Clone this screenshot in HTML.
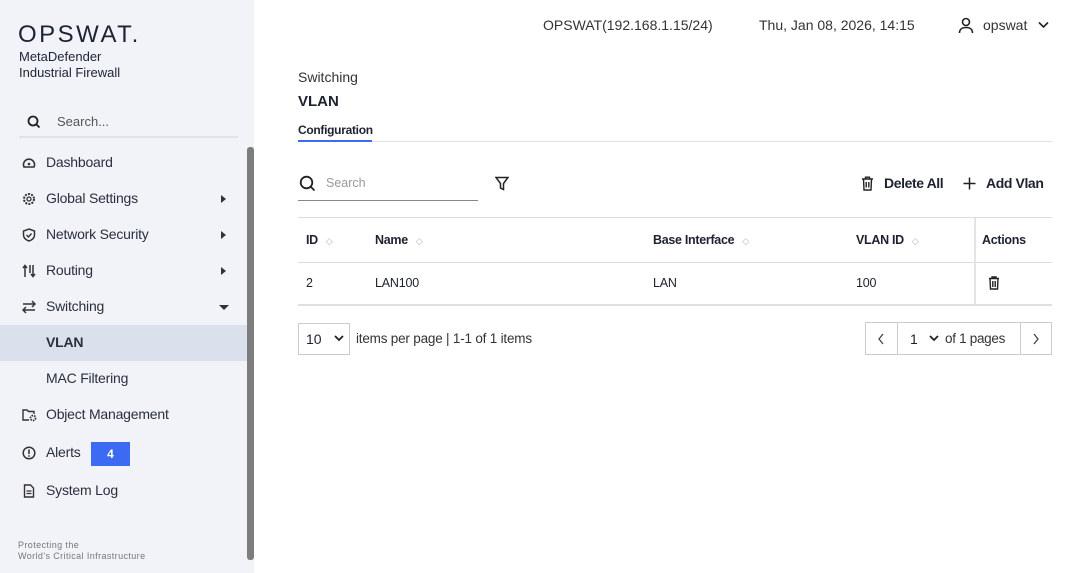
<!DOCTYPE html><html><head><meta charset="utf-8"><style>
*{box-sizing:border-box;margin:0;padding:0}
body{width:1080px;height:573px;overflow:hidden;font-family:"Liberation Sans",sans-serif;background:#fff;position:relative;color:#1e2230}
.sb{position:absolute;left:0;top:0;width:254px;height:573px;background:#f1f3f9}
.scroll{position:absolute;left:247px;top:147px;width:7px;height:413px;background:#7d7d7d;border-radius:3px}
.t{position:absolute;white-space:nowrap}
.nav{position:absolute;left:0;width:247px;height:36px;font-size:14px;color:#2a2f3d;letter-spacing:-0.2px}
.nav span{position:absolute;left:46px;top:9px}
.nav svg{position:absolute;left:22px;top:11px}
.arr{position:absolute;left:221px;top:14px;width:0;height:0;border-top:4px solid transparent;border-bottom:4px solid transparent;border-left:5px solid #333}
.hd{font-size:12.5px;font-weight:bold;letter-spacing:-0.3px}
.cell{font-size:12.5px;letter-spacing:-0.2px}
.sort{display:inline-block;color:#d0d3da;font-size:9px;margin-left:8px}
</style></head><body>
<div class="sb">
<div class="t" style="left:18px;top:21px;font-size:24px;letter-spacing:2.5px;color:#1d2333;font-weight:300">OPSWAT.</div>
<div class="t" style="left:19px;top:49px;font-size:13px;line-height:16px;color:#1d2333">MetaDefender<br>Industrial Firewall</div>
<svg class="t" style="left:27px;top:115px" width="14" height="14" viewBox="0 0 14 14"><circle cx="6" cy="6" r="4.5" fill="none" stroke="#222" stroke-width="1.8"/><path d="M9.5 9.5L12.5 12.5" stroke="#222" stroke-width="1.8"/></svg>
<div class="t" style="left:57px;top:114px;font-size:13px;color:#555">Search...</div>
<div class="t" style="left:19px;top:136px;width:219px;height:2px;background:#e0e2e8"></div>
<div class="nav" style="top:145px"><svg width="14" height="14" viewBox="0 0 14 14"><path d="M2 11A5.5 5.5 0 1 1 12 11Z" fill="none" stroke="#333" stroke-width="1.6"/><circle cx="7" cy="8" r="1.3" fill="#333"/></svg><span>Dashboard</span></div>
<div class="nav" style="top:181px"><svg width="14" height="14" viewBox="0 0 14 14"><circle cx="7" cy="7" r="5" fill="none" stroke="#333" stroke-width="2" stroke-dasharray="2 1.2"/><circle cx="7" cy="7" r="2" fill="none" stroke="#333" stroke-width="1.3"/></svg><span>Global Settings</span><i class="arr"></i></div>
<div class="nav" style="top:217px"><svg width="14" height="14" viewBox="0 0 14 14"><path d="M7 1L12.5 3V7C12.5 10 10 12 7 13C4 12 1.5 10 1.5 7V3Z" fill="none" stroke="#333" stroke-width="1.5"/><path d="M4.5 7L6.5 9L9.5 5.5" fill="none" stroke="#333" stroke-width="1.4"/></svg><span>Network Security</span><i class="arr"></i></div>
<div class="nav" style="top:253px"><svg width="14" height="14" viewBox="0 0 14 14"><path d="M3 13V2M1 4L3 1.5L5 4M8 1V9M11 1V12M9 10L11 12.5L13 10" fill="none" stroke="#333" stroke-width="1.5"/></svg><span>Routing</span><i class="arr"></i></div>
<div class="nav" style="top:289px"><svg width="14" height="14" viewBox="0 0 14 14"><path d="M1 4H13M10 1L13 4L10 7M13 10H1M4 7L1 10L4 13" fill="none" stroke="#333" stroke-width="1.5"/></svg><span>Switching</span><i style="position:absolute;left:219px;top:16px;border-left:5px solid transparent;border-right:5px solid transparent;border-top:5px solid #333"></i></div>
<div class="nav" style="top:325px;background:#dbe1ec;font-weight:bold"><span>VLAN</span></div>
<div class="nav" style="top:361px"><span>MAC Filtering</span></div>
<div class="nav" style="top:397px"><svg width="16" height="14" viewBox="0 0 16 14"><path d="M7 12H1V2H5L6.5 3.5H12V6" fill="none" stroke="#333" stroke-width="1.4"/><circle cx="11" cy="10" r="2.5" fill="none" stroke="#333" stroke-width="1.8" stroke-dasharray="1.5 1"/></svg><span>Object Management</span></div>
<div class="nav" style="top:435px"><svg width="14" height="14" viewBox="0 0 14 14"><circle cx="7" cy="7" r="5.8" fill="none" stroke="#333" stroke-width="1.5"/><path d="M7 3.5V8" stroke="#333" stroke-width="1.6"/><circle cx="7" cy="10" r="0.9" fill="#333"/></svg><span>Alerts</span></div>
<div class="t" style="left:91px;top:442px;width:39px;height:24px;background:#3d6af2;color:#fff;font-size:12px;font-weight:bold;text-align:center;line-height:24px">4</div>
<div class="nav" style="top:473px"><svg width="14" height="14" viewBox="0 0 14 14"><path d="M2.5 1H8.5L11.5 4V13H2.5Z" fill="none" stroke="#333" stroke-width="1.4"/><path d="M4.5 7H9.5M4.5 9.5H9.5" stroke="#333" stroke-width="1.3"/></svg><span>System Log</span></div>
<div class="t" style="left:18px;top:540px;font-size:9px;line-height:11px;color:#777;letter-spacing:0.4px">Protecting the<br>World's Critical Infrastructure</div>
</div>
<div class="scroll"></div>

<div class="t" style="left:543px;top:17px;font-size:14px;color:#333">OPSWAT(192.168.1.15/24)</div>
<div class="t" style="left:759px;top:17px;font-size:14px;color:#333">Thu, Jan 08, 2026, 14:15</div>
<svg class="t" style="left:958px;top:17px" width="16" height="17" viewBox="0 0 16 17"><circle cx="8" cy="5" r="3.5" fill="none" stroke="#222" stroke-width="1.6"/><path d="M1.5 16C1.5 12 4.5 10.5 8 10.5S14.5 12 14.5 16" fill="none" stroke="#222" stroke-width="1.6"/></svg>
<div class="t" style="left:983px;top:17px;font-size:14px;color:#333">opswat</div>
<svg class="t" style="left:1038px;top:21px" width="11" height="8" viewBox="0 0 11 8"><path d="M1 1.5L5.5 6L10 1.5" fill="none" stroke="#222" stroke-width="1.6"/></svg>

<div class="t" style="left:298px;top:69px;font-size:14px;color:#333">Switching</div>
<div class="t" style="left:298px;top:93px;font-size:15px;font-weight:bold">VLAN</div>
<div class="t" style="left:298px;top:123px;font-size:12px;font-weight:bold;letter-spacing:-0.3px">Configuration</div>
<div class="t" style="left:298px;top:140px;width:74px;height:2px;background:#3d6af2"></div>
<div class="t" style="left:372px;top:141px;width:680px;height:1px;background:#dde0e6"></div>

<svg class="t" style="left:299px;top:175px" width="17" height="17" viewBox="0 0 17 17"><circle cx="7.5" cy="7.5" r="5.8" fill="none" stroke="#222" stroke-width="1.8"/><path d="M11.5 11.5L15.5 15.5" stroke="#222" stroke-width="1.8"/></svg>
<div class="t" style="left:326px;top:176px;font-size:12.5px;color:#999">Search</div>
<div class="t" style="left:298px;top:200px;width:180px;height:1px;background:#888"></div>
<svg class="t" style="left:495px;top:176px" width="14" height="15" viewBox="0 0 14 15"><path d="M1 1.5H13L8.5 7.5V13.5L5.5 12V7.5Z" fill="none" stroke="#222" stroke-width="1.5"/></svg>
<svg class="t" style="left:861px;top:176px" width="13" height="15" viewBox="0 0 13 15"><path d="M1 3H12M4.5 3V1.2H8.5V3M2.5 3L3 14H10L10.5 3M5.2 6V11.5M7.8 6V11.5" fill="none" stroke="#222" stroke-width="1.4"/></svg>
<div class="t" style="left:884px;top:175px;font-size:14px;font-weight:bold;letter-spacing:-0.4px">Delete All</div>
<svg class="t" style="left:963px;top:177px" width="13" height="13" viewBox="0 0 13 13"><path d="M6.5 0.5V12.5M0.5 6.5H12.5" stroke="#222" stroke-width="1.5"/></svg>
<div class="t" style="left:986px;top:175px;font-size:14px;font-weight:bold;letter-spacing:-0.4px">Add Vlan</div>

<div class="t" style="left:298px;top:217px;width:754px;height:1px;background:#ddd"></div>
<div class="t" style="left:298px;top:262px;width:754px;height:1px;background:#ddd"></div>
<div class="t" style="left:298px;top:304px;width:754px;height:2px;background:#e0e0e0"></div>
<div class="t" style="left:974px;top:218px;width:2px;height:87px;background:#e4e4e4"></div>
<div class="t hd" style="left:306px;top:233px">ID<span class="sort">◇</span></div>
<div class="t hd" style="left:375px;top:233px">Name<span class="sort">◇</span></div>
<div class="t hd" style="left:653px;top:233px">Base Interface<span class="sort">◇</span></div>
<div class="t hd" style="left:856px;top:233px">VLAN ID<span class="sort">◇</span></div>
<div class="t hd" style="left:982px;top:233px">Actions</div>
<div class="t cell" style="left:306px;top:276px">2</div>
<div class="t cell" style="left:375px;top:276px">LAN100</div>
<div class="t cell" style="left:653px;top:276px">LAN</div>
<div class="t cell" style="left:856px;top:276px">100</div>
<svg class="t" style="left:988px;top:276px" width="12" height="14" viewBox="0 0 12 14"><path d="M1 2.5H11M4 2.5V1H8V2.5M2 2.5L2.5 13H9.5L10 2.5M4.8 5V11M7.2 5V11" fill="none" stroke="#222" stroke-width="1.4"/></svg>

<div class="t" style="left:298px;top:323px;width:52px;height:32px;border:1px solid #ccc"></div>
<div class="t" style="left:306px;top:331px;font-size:14px">10</div>
<svg class="t" style="left:334px;top:335px" width="10" height="7" viewBox="0 0 10 7"><path d="M1 1L5 5L9 1" fill="none" stroke="#222" stroke-width="1.8"/></svg>
<div class="t" style="left:356px;top:331px;font-size:13.5px;color:#333;letter-spacing:-0.2px">items per page | 1-1 of 1 items</div>
<div class="t" style="left:865px;top:322px;width:187px;height:33px;border:1px solid #ccc"></div>
<div class="t" style="left:897px;top:322px;width:1px;height:33px;background:#ccc"></div>
<div class="t" style="left:1020px;top:322px;width:1px;height:33px;background:#ccc"></div>
<svg class="t" style="left:877px;top:333px" width="8" height="12" viewBox="0 0 8 12"><path d="M6 1L2 6L6 11" fill="none" stroke="#444" stroke-width="1.3"/></svg>
<svg class="t" style="left:1032px;top:333px" width="8" height="12" viewBox="0 0 8 12"><path d="M2 1L6 6L2 11" fill="none" stroke="#444" stroke-width="1.3"/></svg>
<div class="t" style="left:910px;top:331px;font-size:14px">1</div>
<svg class="t" style="left:929px;top:335px" width="10" height="7" viewBox="0 0 10 7"><path d="M1 1L5 5L9 1" fill="none" stroke="#222" stroke-width="1.8"/></svg>
<div class="t" style="left:945px;top:331px;font-size:13.5px;color:#333;letter-spacing:-0.3px">of 1 pages</div>
</body></html>
